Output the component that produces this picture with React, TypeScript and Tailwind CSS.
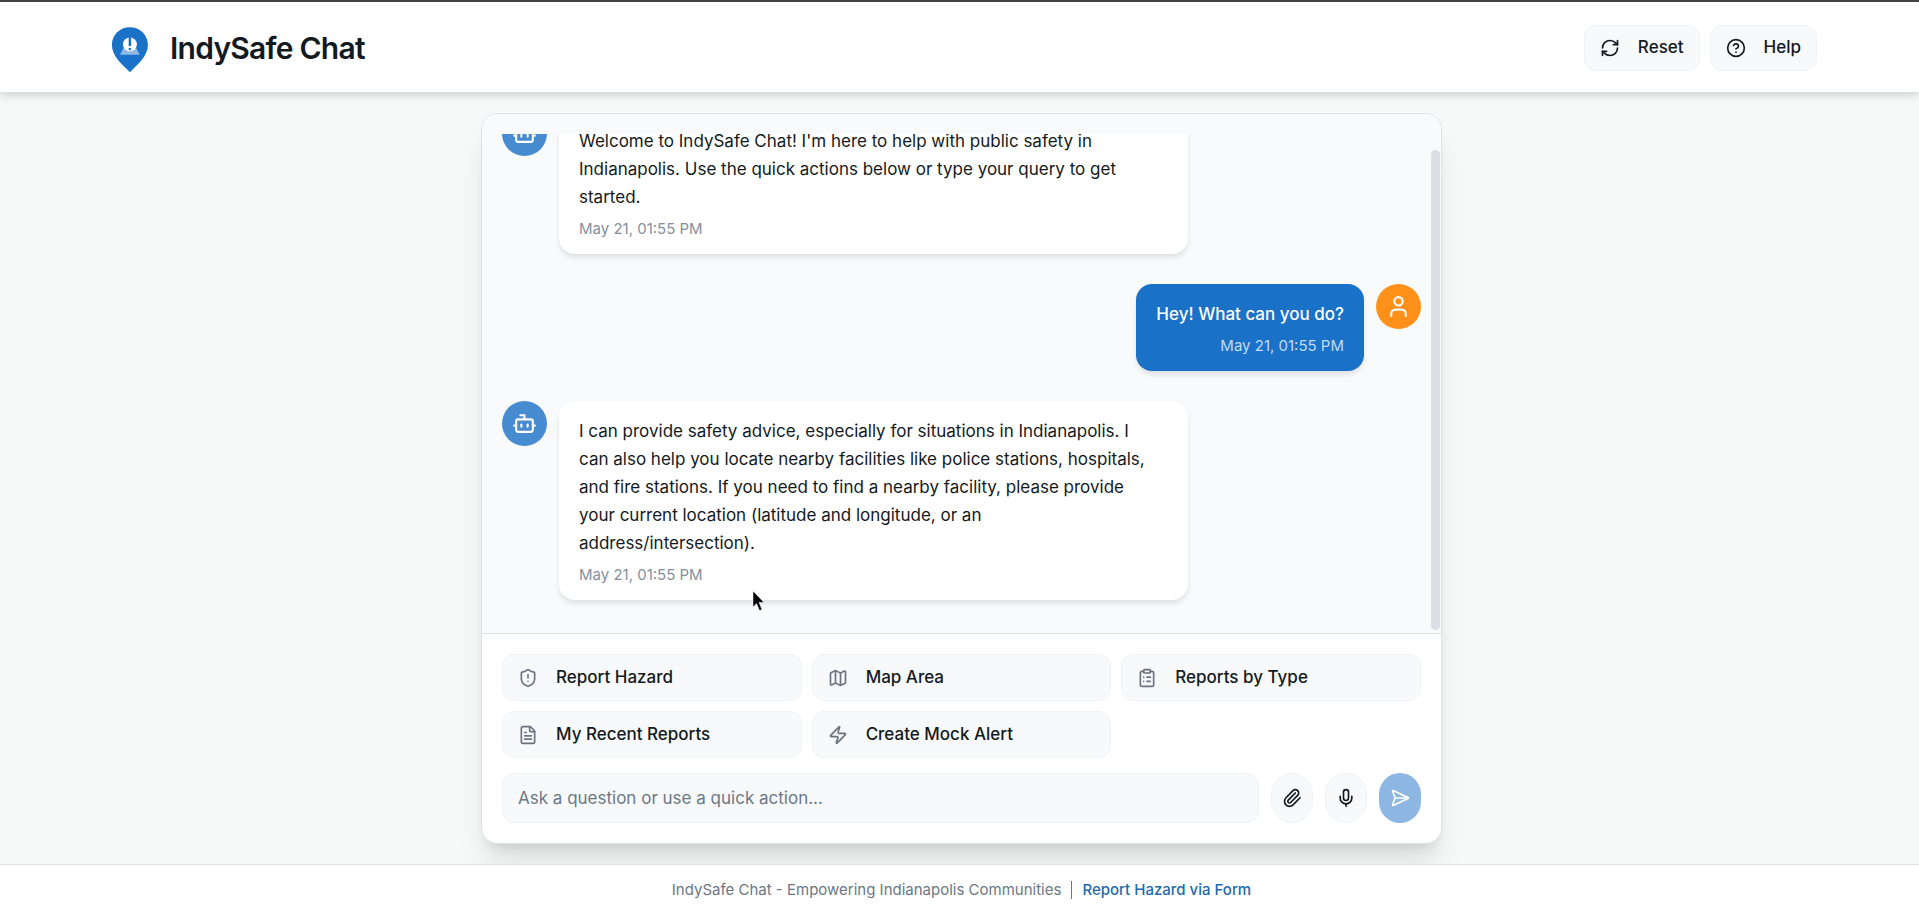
import {
  Bot,
  CircleHelp,
  ClipboardList,
  FileText,
  Map,
  Mic,
  Paperclip,
  RefreshCw,
  SendHorizontal,
  ShieldAlert,
  User,
  Zap,
} from 'lucide-react'
import clsx from 'clsx'
import { useState } from 'react'

const messages = [
  {
    id: 1,
    from: 'bot',
    text: "Welcome to IndySafe Chat! I'm here to help with public safety in Indianapolis. Use the quick actions below or type your query to get started.",
    time: 'May 21, 01:55 PM',
  },
  {
    id: 2,
    from: 'user',
    text: 'Hey! What can you do?',
    time: 'May 21, 01:55 PM',
  },
  {
    id: 3,
    from: 'bot',
    text: 'I can provide safety advice, especially for situations in Indianapolis. I can also help you locate nearby facilities like police stations, hospitals, and fire stations. If you need to find a nearby facility, please provide your current location (latitude and longitude, or an address/intersection).',
    time: 'May 21, 01:55 PM',
  },
]

const quickActions = [
  { label: 'Report Hazard', icon: ShieldAlert },
  { label: 'Map Area', icon: Map },
  { label: 'Reports by Type', icon: ClipboardList },
  { label: 'My Recent Reports', icon: FileText },
  { label: 'Create Mock Alert', icon: Zap },
]

const Logo = () => (
  <svg width="54" height="54" viewBox="-0.4 -0.8 24 24" aria-hidden="true">
    <path
      d="M12 2C7.5 2 4 5.400 4 9.800C4 15 8.600 18.500 12 22C15.400 18.500 20 15 20 9.800C20 5.400 16.500 2 12 2Z"
      fill="#1971c8"
    />
    <path d="M7.600 14.200L9.200 11.200H14.800L16.400 14.200Z" fill="#8fb8e4" />
    <circle cx="12" cy="9.600" r="3.100" fill="#fff" />
    <path d="M12 6.400V10.300" stroke="#1971c8" strokeWidth="1.100" />
    <circle cx="12" cy="11.700" r="0.600" fill="#1971c8" />
  </svg>
)

const Header = () => (
  <header className="relative z-10 flex h-[92px] shrink-0 items-center justify-between border-t-2 border-[#444444] bg-white px-[102px] pt-0.5 shadow-[0_4px_8px_rgba(0,0,0,0.14)]">
    <div className="flex items-center gap-3.5">
      <Logo />
      <h1 className="text-[30px] font-semibold leading-9 tracking-tight">
        IndySafe Chat
      </h1>
    </div>
    <div className="flex gap-2.5">
      <button className="flex h-[46px] items-center gap-[18px] rounded-xl border border-[#f0f2f4] bg-[#f8f9fb] px-[15px] text-[17px] font-medium">
        <RefreshCw size={20} />
        Reset
      </button>
      <button className="flex h-[46px] items-center gap-[18px] rounded-xl border border-[#f0f2f4] bg-[#f8f9fb] px-[15px] text-[17px] font-medium">
        <CircleHelp size={20} />
        Help
      </button>
    </div>
  </header>
)

const Message = ({ message }: { message: (typeof messages)[number] }) => {
  const isUser = message.from === 'user'

  return (
    <div
      className={clsx(
        'flex items-start gap-3',
        isUser && 'flex-row-reverse',
      )}
    >
      <div
        className={clsx(
          'flex size-[45px] shrink-0 items-center justify-center rounded-full text-white',
          isUser ? 'bg-[#ff9019]' : 'bg-[#478bd1]',
        )}
      >
        {isUser ? <User size={25} /> : <Bot size={25} />}
      </div>
      <div
        className={clsx(
          'max-w-[629px] rounded-2xl pb-[13px] pl-5 pt-4 shadow-[0_4px_6px_-1px_rgba(0,0,0,0.12)]',
          isUser ? 'bg-[#1971c8] pr-5 text-white' : 'bg-white pr-8',
        )}
      >
        <p
          className={clsx(
            'text-[17px] leading-7',
            isUser && 'font-medium',
          )}
        >
          {message.text}
        </p>
        <p
          className={clsx(
            'mt-1.5 text-[15px] leading-6',
            isUser ? 'text-right text-[#c2daf3]' : 'text-[#84909d]',
          )}
        >
          {message.time}
        </p>
      </div>
    </div>
  )
}

const Composer = () => {
  const [query, setQuery] = useState('')

  return (
    <form
      className="flex gap-3"
      onSubmit={(e) => {
        e.preventDefault()
        setQuery('')
      }}
    >
      <input
        type="text"
        aria-label="Message"
        value={query}
        onChange={(e) => setQuery(e.target.value)}
        placeholder="Ask a question or use a quick action..."
        className="h-[50px] min-w-0 flex-1 rounded-xl border border-[#f0f2f4] bg-[#f8f9fb] px-[15px] text-[17px] outline-none placeholder:text-[#6b7885]"
      />
      <button
        type="button"
        aria-label="Attach file"
        className="flex h-[50px] w-[42px] items-center justify-center rounded-full border border-[#f0f2f4] bg-[#f8f9fb]"
      >
        <Paperclip size={20} />
      </button>
      <button
        type="button"
        aria-label="Voice input"
        className="flex h-[50px] w-[42px] items-center justify-center rounded-full border border-[#f0f2f4] bg-[#f8f9fb]"
      >
        <Mic size={20} />
      </button>
      <button
        type="submit"
        aria-label="Send"
        className="flex h-[50px] w-[42px] items-center justify-center rounded-full bg-[#8db7e2] text-white"
      >
        <SendHorizontal size={20} />
      </button>
    </form>
  )
}

const Footer = () => (
  <footer className="relative z-10 flex h-[45px] shrink-0 items-center justify-center gap-2.5 border-t border-[#dfe3e4] bg-white pl-1 pt-1.5 text-[15px] text-[#6b7885]">
    <span>IndySafe Chat - Empowering Indianapolis Communities</span>
    <span className="h-[18px] w-px bg-[#6b7885]" />
    <a href="#" className="font-medium text-[#2469ab]">
      Report Hazard via Form
    </a>
  </footer>
)

const App = () => (
  <div className="flex h-screen flex-col bg-[#f7f9f8] font-['Inter',sans-serif] text-[#131a21]">
    <Header />
    <main className="flex min-h-0 flex-1 justify-center pb-5 pl-1 pt-[21px]">
      <section className="flex w-full max-w-[961px] flex-col overflow-hidden rounded-2xl border border-[#dfe2e5] bg-white shadow-[0_25px_31px_-6px_rgba(0,0,0,0.1),0_10px_13px_-7px_rgba(0,0,0,0.1)]">
        <div className="relative flex min-h-0 flex-1 bg-[#f8fafc] pt-5">
          {/* column-reverse keeps the newest message in view */}
          <div className="flex flex-1 flex-col-reverse overflow-y-auto px-5 [scrollbar-width:none]">
            <div className="flex flex-col gap-[30px] pb-[33px]">
              {messages.map((message) => (
                <Message key={message.id} message={message} />
              ))}
            </div>
          </div>
          <div className="absolute bottom-[3px] right-px top-9 w-[9px] rounded-full bg-[#dedfe6]" />
        </div>
        <div className="flex flex-col gap-[15px] border-t border-[#dfe3e8] p-5">
          <div className="grid grid-cols-3 gap-2.5">
            {quickActions.map(({ label, icon: Icon }) => (
              <button
                key={label}
                className="flex h-[47px] items-center gap-[18px] rounded-xl border border-[#f0f2f4] bg-[#f8f9fb] px-[15px] text-[17px] font-medium"
              >
                <Icon size={20} className="text-[#6b7280]" />
                {label}
              </button>
            ))}
          </div>
          <Composer />
        </div>
      </section>
    </main>
    <Footer />
    <svg
      className="pointer-events-none absolute left-[752px] top-[590px] z-20"
      width="13"
      height="22"
      viewBox="0 0 13 22"
      aria-hidden="true"
    >
      <path
        d="M1 1V17L4.500 13.500L7.500 20.500L10 19.500L7 12.500H12Z"
        fill="#000"
        stroke="#fff"
        strokeWidth="0.500"
      />
    </svg>
  </div>
)

export default App
